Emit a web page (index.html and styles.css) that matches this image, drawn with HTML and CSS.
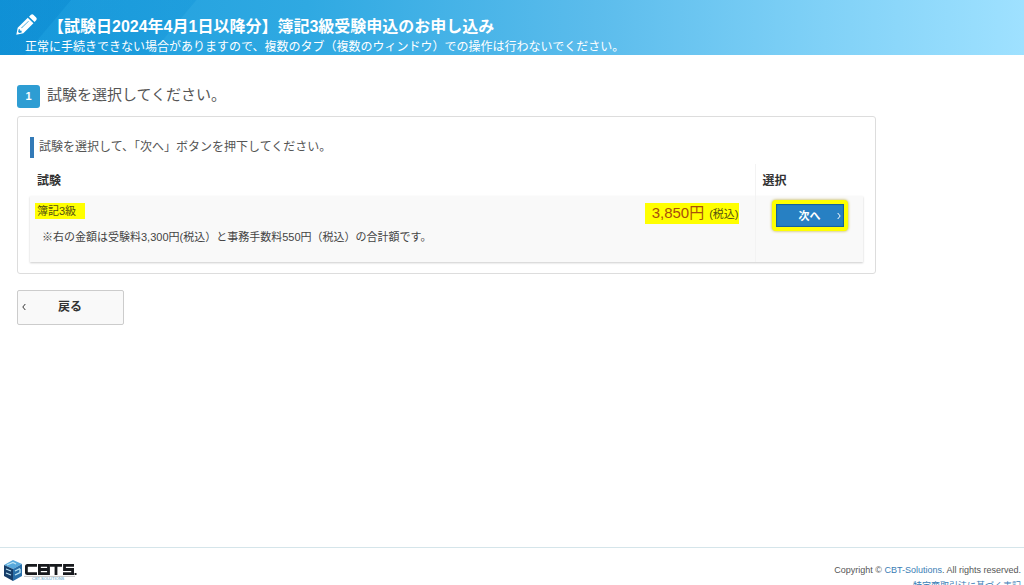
FILE: index.html
```html
<!DOCTYPE html>
<html lang="ja">
<head>
<meta charset="utf-8">
<meta name="viewport" content="width=device-width, initial-scale=1">
<title>簿記3級受験申込のお申し込み</title>
<link rel="stylesheet" href="styles.css">
</head>
<body>
<header class="page-header">
  <svg class="pencil" viewBox="0 0 20 20" aria-hidden="true">
    <path fill="#fff" fill-rule="evenodd" d="M0.3 19.7 1.6 13 11.2 3.6 16.6 8.9 7 18.4ZM12.4 2.5 14.2.8Q15.5-.3 16.8.9L19.2 3.3Q20.3 4.6 19.2 5.9L17.7 7.7ZM5 13.2 5.4 13.6 12.2 7 11.8 6.600ZM2.6 14.5 2 17.1 3.2 18.2 5.4 17.5 5.3 15.9 3.6 15.8 3.6 14.3Z"/>
  </svg>
  <div class="header-text">
    <h1 class="title">【試験日2024年4月1日以降分】簿記3級受験申込のお申し込み</h1>
    <p class="notice">正常に手続きできない場合がありますので、複数のタブ（複数のウィンドウ）での操作は行わないでください。</p>
  </div>
</header>

<main class="content">
  <h2 class="step"><span class="step-number">1</span>試験を選択してください。</h2>

  <section class="panel">
    <p class="lead">試験を選択して、「次へ」ボタンを押下してください。</p>
    <table class="exams">
      <thead>
        <tr><th scope="col">試験</th><th scope="col" class="choose">選択</th></tr>
      </thead>
      <tbody>
        <tr>
          <td>
            <div class="exam-row">
              <span class="exam-name">簿記3級</span>
              <span class="price"><span class="amount">3,850円</span><small class="tax">(税込)</small></span>
            </div>
            <p class="note">※右の金額は受験料3,300円(税込）と事務手数料550円（税込）の合計額です。</p>
          </td>
          <td class="choose">
            <button type="button" class="next">次へ
              <svg class="chevron" viewBox="0 0 4 8" aria-hidden="true"><path d="M.7 1 3.2 4 .7 7"/></svg>
            </button>
          </td>
        </tr>
      </tbody>
    </table>
  </section>

  <button type="button" class="back">
    <svg class="chevron" viewBox="0 0 4 8" aria-hidden="true"><path d="M3.3 1 .8 4 3.3 7"/></svg>戻る
  </button>
</main>

<footer class="page-footer">
  <svg class="logo" viewBox="0 0 73 22" role="img" aria-label="CBTS CBT-SOLUTIONS">
    <path fill="#58a9dc" d="M0 5 9 0 18 4 9 9Z"/>
    <path fill="#173e69" d="M0 5 9 9V21L0 16Z"/>
    <path fill="#286fa9" d="M9 9 18 4V16L9 21Z"/>
    <path fill="none" stroke="#bce5f5" stroke-width="1.3" d="M3 5 9 2.500 12 4M2 9 7 11M2 13 7 15M11 11 16 8.500M11 15 16 12.500V9"/>
    <g fill="none" stroke="#17191d" stroke-width="2.800">
      <path d="M33 5.400H23.500Q22.400 5.400 22.400 6.500V12.500Q22.400 13.600 23.500 13.600H33M35.400 5.400H44.500V13.600H35.400ZM35.400 9.500H44.500M46 5.400H58M52 5.400V15M70 5.400H60.500V9.500H68.600V13.600H59"/>
    </g>
    <path fill="#17191d" d="M70.500 13H72.500V15H70.500Z"/>
    <path stroke="#999" stroke-width=".6" d="M20 16.400H71"/>
    <text class="logo-caption" x="28" y="20">CBT-SOLUTIONS</text>
  </svg>
  <div class="legal">
    <p>Copyright © <a href="#">CBT-Solutions</a>. All rights reserved.</p>
    <p><a href="#">特定商取引法に基づく表記</a></p>
  </div>
</footer>
</body>
</html>
```
FILE: styles.css
```css
* { box-sizing: border-box; }

body {
  margin: 0;
  height: 100vh;
  display: flex;
  flex-direction: column;
  overflow: hidden;
  background: #fff;
  color: #555;
  font-family: "Liberation Sans", "Noto Sans CJK JP", sans-serif;
  font-size: 12px;
  line-height: 16px;
}

h1, h2, p { margin: 0; }
button { font: inherit; cursor: pointer; }
a { color: #3a7db5; text-decoration: none; }

.page-header {
  display: flex;
  height: 55px;
  flex-shrink: 0;
  padding: 14px 16px 0;
  color: #fff;
  background:
    linear-gradient(130deg, rgba(0, 125, 200, .28) 54px, transparent 55px),
    linear-gradient(130deg, rgba(0, 135, 210, .22) 150px, transparent 151px),
    linear-gradient(90deg, #1c9ddd 0%, #2fa9e2 30%, #5bbcec 58%, #7ccff6 78%, #9fe1ff 100%);
}
.pencil { width: 21px; height: 21px; flex-shrink: 0; }
.header-text { display: flex; flex-direction: column; }
.title { padding-left: 11px; font-size: 16px; line-height: 25px; font-weight: 700; }
.notice { margin-left: -12px; white-space: nowrap; }

.content { flex: 1; padding: 27px 17px 0; }

.step {
  display: flex;
  align-items: flex-start;
  gap: 7px;
  height: 28px;
  font-size: 15px;
  line-height: 25px;
  font-weight: 400;
}
.step-number {
  width: 23px;
  margin-top: 3px;
  border-radius: 3px;
  background: #2e9dd3;
  color: #fff;
  font-size: 11px;
  line-height: 23px;
  font-weight: 700;
  text-align: center;
}

.panel {
  max-width: 859px;
  margin-top: 6px;
  padding: 20px 12px 11px;
  border: 1px solid #ddd;
  border-radius: 3px;
}
.lead { padding-left: 5px; border-left: 4px solid #337ab7; line-height: 21px; }

.exams { width: 100%; margin-top: 6px; border-collapse: collapse; }
.exams th { height: 32px; padding: 2px 7px 0; text-align: left; color: #333; }
.exams td { height: 66px; padding: 7px 16px 0 5px; vertical-align: top; }
.exams tbody tr { background: #f9f9f9; box-shadow: 0 1px 2px #ccc; }
.exams .choose { width: 108px; border-left: 1px solid #f3f3f3; }
.exams td.choose { padding: 4px 14px 0 16px; }

.exam-row { display: flex; justify-content: space-between; align-items: flex-start; }
.exam-name { padding: 0 9px 0 2px; background: #ff0; color: #554f10; font-size: 11px; }
.price { padding-left: 7px; background: #ff0; line-height: 20px; }
.amount { color: #a94f0c; font-size: 15px; }
.tax { margin-left: 5px; color: #555010; font-size: 11px; }
.note { padding: 5px 0 0 7px; color: #444; font-size: 11px; }

.chevron { width: 4px; height: 8px; fill: none; stroke: currentColor; stroke-width: 1; }

.next {
  display: flex;
  align-items: center;
  justify-content: flex-end;
  gap: 16px;
  width: 76px;
  height: 31px;
  padding: 0 3px;
  border: 4px solid #ff0;
  border-radius: 4px;
  background: #2780c3;
  box-shadow: 0 0 3px #b9a830, inset 0 0 1px 1px #185f96;
  color: #fff;
  font-size: 11px;
  font-weight: 700;
}

.back {
  display: flex;
  align-items: center;
  gap: 32px;
  width: 107px;
  height: 35px;
  margin-top: 16px;
  padding: 0 4px 2px;
  border: 1px solid #ccc;
  border-radius: 2px;
  background: #f9f9f9;
  color: #333;
  font-weight: 700;
}

.page-footer {
  display: flex;
  justify-content: space-between;
  height: 38px;
  flex-shrink: 0;
  padding: 12px 3px 0 4px;
  border-top: 1px solid #d5e5ea;
  overflow: hidden;
}
.logo { width: 73px; height: 22px; }
.logo-caption { font-size: 4px; fill: #4c9bc8; }
.legal { padding-top: 2px; font-size: 9px; text-align: right; }
```
